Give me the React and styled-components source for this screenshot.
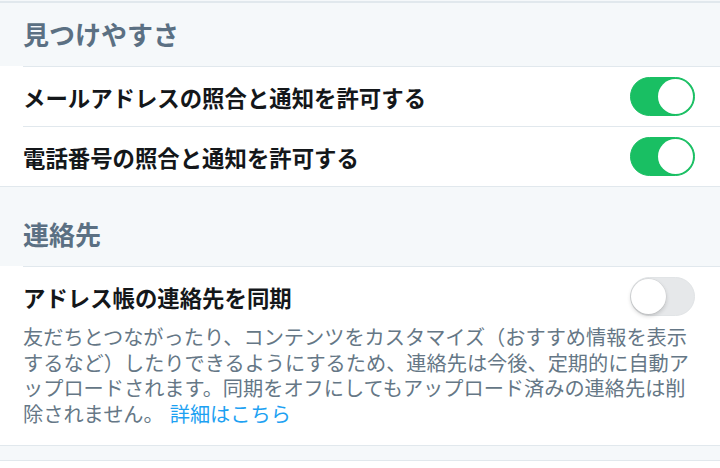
import React from 'react'
import styled, { createGlobalStyle } from 'styled-components'

const GlobalStyle = createGlobalStyle`
  html, body {
    margin: 0;
    padding: 0;
    background: #ffffff;
  }
  body {
    font-family: "Noto Sans CJK JP", "Noto Sans", sans-serif;
    -webkit-font-smoothing: antialiased;
  }
`

// page
const Page = styled.div`
  width: 720px;
  height: 468px;
  overflow: hidden;
  background: #f5f8fa;
  padding-top: 1px;
  box-sizing: border-box;
`

const TopRule = styled.div`
  border-top: 2px solid #e1e8ed;
`

// section header
const SectionHeader = styled.div`
  display: flex;
  align-items: flex-end;
  height: ${p => p.$height}px;
  padding: 0 0 17px 23px;
  box-sizing: border-box;
  font-size: 26px;
  line-height: 30px;
  font-weight: 700;
  color: #5b7083;
`

// white group of rows
const Group = styled.div`
  background: #ffffff;
  border-bottom: 1px solid #e1e8ed;
`

const Row = styled.div`
  margin-left: 23px;
  border-top: 1px solid #e1e8ed;
  padding-right: 25px;
`

const RowLine = styled.div`
  display: flex;
  align-items: center;
  justify-content: space-between;
  height: ${p => p.$height}px;
  padding-top: ${p => p.$top || 0}px;
`

const Label = styled.div`
  font-size: 22.4px;
  line-height: 30px;
  font-weight: 700;
  color: #14171a;
`

const Description = styled.p`
  margin: 8px 0 0 0;
  padding-bottom: 19px;
  font-size: 20.2px;
  line-height: 25.6px;
  color: #657786;
  white-space: nowrap;
`

const Link = styled.a`
  color: #1da1f2;
  text-decoration: none;
  margin-left: 6px;
`

// toggle
const Track = styled.div`
  position: relative;
  flex: none;
  width: 65px;
  height: 39px;
  border-radius: 20px;
  box-sizing: border-box;
  background: ${p => (p.$on ? '#19bf63' : '#e6e8ea')};
  border: 1px solid ${p => (p.$on ? '#19bf63' : '#e1e4e6')};
`

const Knob = styled.div`
  position: absolute;
  top: 1px;
  left: ${p => (p.$on ? '27px' : '0px')};
  width: 35px;
  height: 35px;
  border-radius: 50%;
  background: #ffffff;
  box-shadow: ${p => (p.$on
    ? '0 0 0 0.5px #19bf63'
    : '0 2px 4px rgba(0,0,0,0.18), 0 0 0 0.5px rgba(0,0,0,0.06)')};
`

const BottomSpace = styled.div`
  height: 14px;
`

const BottomRule = styled.div`
  border-top: 1px solid #e1e8ed;
  background: #ffffff;
  height: 20px;
`

function Toggle ({ on }) {
  return (
    <Track $on={on}>
      <Knob $on={on} />
    </Track>
  )
}

export default function App () {
  return (
    <>
      <GlobalStyle />
      <Page>
        <TopRule />
        <SectionHeader $height={63}>見つけやすさ</SectionHeader>
        <Group>
          <Row>
            <RowLine $height={59}>
              <Label>メールアドレスの照合と通知を許可する</Label>
              <Toggle on />
            </RowLine>
          </Row>
          <Row>
            <RowLine $height={59}>
              <Label>電話番号の照合と通知を許可する</Label>
              <Toggle on />
            </RowLine>
          </Row>
        </Group>

        <SectionHeader $height={79}>連絡先</SectionHeader>
        <Group>
          <Row>
            <RowLine $height={39} $top={10}>
              <Label>アドレス帳の連絡先を同期</Label>
              <Toggle on={false} />
            </RowLine>
            <Description>
              友だちとつながったり、コンテンツをカスタマイズ（おすすめ情報を表示<br />
              するなど）したりできるようにするため、連絡先は今後、定期的に自動ア<br />
              ップロードされます。同期をオフにしてもアップロード済みの連絡先は削<br />
              除されません。<Link href='#'>詳細はこちら</Link>
            </Description>
          </Row>
        </Group>
        <BottomSpace />
        <BottomRule />
      </Page>
    </>
  )
}
